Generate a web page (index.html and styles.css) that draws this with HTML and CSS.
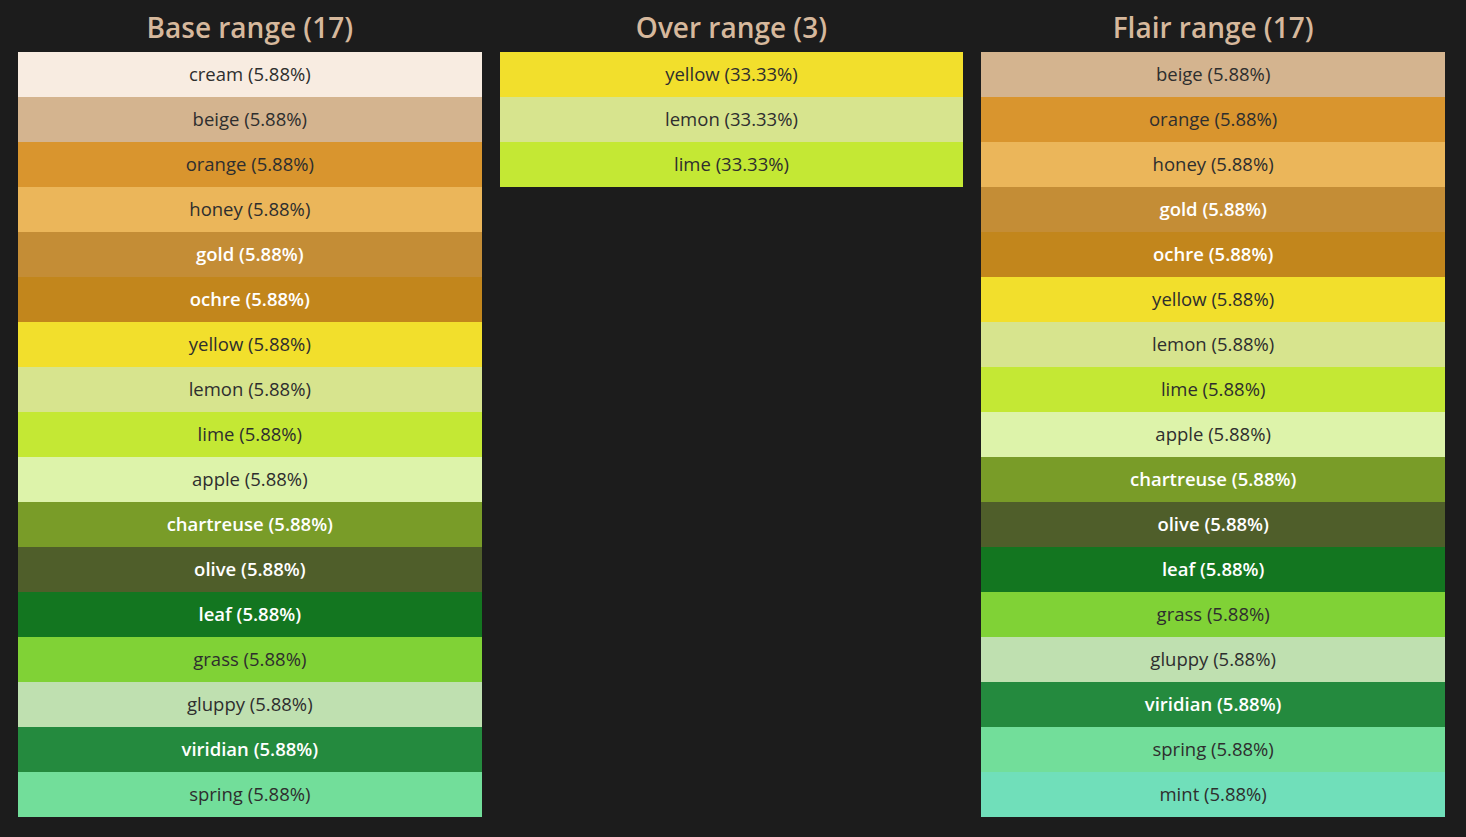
FILE: index.html
```html
<!DOCTYPE html>
<html lang="en">
<head>
<meta charset="utf-8">
<title>Ranges</title>
<link rel="stylesheet" href="styles.css">
</head>
<body>
<main class="ranges">
  <section class="range">
    <h2 class="range-title">Base range (17)</h2>
    <ul class="swatches">
      <li class="swatch cream">cream (5.88%)</li>
      <li class="swatch beige">beige (5.88%)</li>
      <li class="swatch orange">orange (5.88%)</li>
      <li class="swatch honey">honey (5.88%)</li>
      <li class="swatch gold light">gold (5.88%)</li>
      <li class="swatch ochre light">ochre (5.88%)</li>
      <li class="swatch yellow">yellow (5.88%)</li>
      <li class="swatch lemon">lemon (5.88%)</li>
      <li class="swatch lime">lime (5.88%)</li>
      <li class="swatch apple">apple (5.88%)</li>
      <li class="swatch chartreuse light">chartreuse (5.88%)</li>
      <li class="swatch olive light">olive (5.88%)</li>
      <li class="swatch leaf light">leaf (5.88%)</li>
      <li class="swatch grass">grass (5.88%)</li>
      <li class="swatch gluppy">gluppy (5.88%)</li>
      <li class="swatch viridian light">viridian (5.88%)</li>
      <li class="swatch spring">spring (5.88%)</li>
    </ul>
  </section>
  <section class="range">
    <h2 class="range-title">Over range (3)</h2>
    <ul class="swatches">
      <li class="swatch yellow">yellow (33.33%)</li>
      <li class="swatch lemon">lemon (33.33%)</li>
      <li class="swatch lime">lime (33.33%)</li>
    </ul>
  </section>
  <section class="range">
    <h2 class="range-title">Flair range (17)</h2>
    <ul class="swatches">
      <li class="swatch beige">beige (5.88%)</li>
      <li class="swatch orange">orange (5.88%)</li>
      <li class="swatch honey">honey (5.88%)</li>
      <li class="swatch gold light">gold (5.88%)</li>
      <li class="swatch ochre light">ochre (5.88%)</li>
      <li class="swatch yellow">yellow (5.88%)</li>
      <li class="swatch lemon">lemon (5.88%)</li>
      <li class="swatch lime">lime (5.88%)</li>
      <li class="swatch apple">apple (5.88%)</li>
      <li class="swatch chartreuse light">chartreuse (5.88%)</li>
      <li class="swatch olive light">olive (5.88%)</li>
      <li class="swatch leaf light">leaf (5.88%)</li>
      <li class="swatch grass">grass (5.88%)</li>
      <li class="swatch gluppy">gluppy (5.88%)</li>
      <li class="swatch viridian light">viridian (5.88%)</li>
      <li class="swatch spring">spring (5.88%)</li>
      <li class="swatch mint">mint (5.88%)</li>
    </ul>
  </section>
</main>
</body>
</html>
```

FILE: styles.css
```css
html, body {
  margin: 0;
  padding: 0;
  background: #1c1c1c;
  font-family: "Open Sans", "Noto Sans", sans-serif;
}

.ranges {
  display: grid;
  grid-template-columns: repeat(3, 1fr);
  column-gap: 18px;
  padding: 0 21px 20px 18px;
  align-items: start;
}

.range {
  display: flex;
  flex-direction: column;
}

.range-title {
  margin: 0;
  height: 52px;
  display: flex;
  align-items: center;
  justify-content: center;
  font-size: 28px;
  font-weight: 600;
  color: #d6b89c;
  padding-top: 2px;
  box-sizing: border-box;
}

.swatches {
  list-style: none;
  margin: 0;
  padding: 0;
  display: flex;
  flex-direction: column;
}

.swatch {
  height: 45px;
  display: flex;
  align-items: center;
  justify-content: center;
  font-size: 18.5px;
  color: #2e2e2e;
  padding-bottom: 2px;
  box-sizing: border-box;
}

.swatch.light {
  color: #ffffff;
  font-weight: 600;
}

.cream { background: #f8ece1; }
.beige { background: #d4b48f; }
.orange { background: #d9952e; }
.honey { background: #ebb65a; }
.gold { background: #c48d36; }
.ochre { background: #c2861c; }
.yellow { background: #f2df2c; }
.lemon { background: #d7e48e; }
.lime { background: #c4e834; }
.apple { background: #ddf3aa; }
.chartreuse { background: #799c28; }
.olive { background: #4f5e2a; }
.leaf { background: #137620; }
.grass { background: #80d236; }
.gluppy { background: #bfe0b0; }
.viridian { background: #248a3e; }
.spring { background: #72de9a; }
.mint { background: #70dfba; }
```
